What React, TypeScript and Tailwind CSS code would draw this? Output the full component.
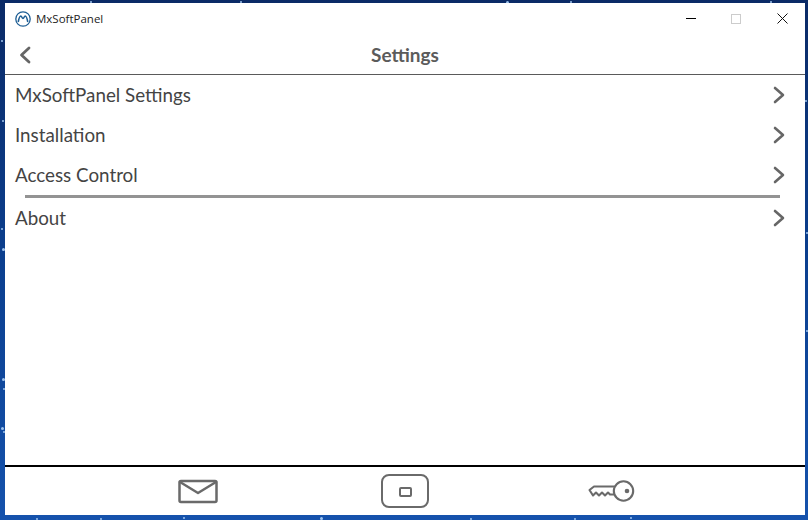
const font = { fontFamily: "Lato, 'Noto Sans', sans-serif" };

const specks: [number, number, number][] = [
  [2, 248, 3], [1, 228, 2], [2, 378, 3], [3, 388, 2], [1, 427, 3], [3, 431, 2], [2, 120, 2], [1, 40, 2],
  [183, 517, 2], [320, 517, 3], [100, 518, 2], [36, 518, 2], [574, 518, 2], [630, 517, 2], [470, 518, 2],
  [506, 1, 3], [570, 1, 2], [90, 1, 2], [240, 1, 2], [770, 1, 2], [806, 232, 2], [806, 330, 2], [805, 100, 2],
];

function Chevron() {
  return (
    <svg width="12" height="18" viewBox="0 0 12 18" fill="none" stroke="#666666" strokeWidth="2.6" strokeLinecap="round" strokeLinejoin="round">
      <path d="M2 2 L10 9 L2 16" />
    </svg>
  );
}

function Row({ label, className }: { label: string; className: string }) {
  return (
    <div className={`flex items-center justify-between pl-[10px] pr-[20px] text-[18.8px] text-[#444444] ${className}`}>
      <span className="whitespace-nowrap leading-none">{label}</span>
      <Chevron />
    </div>
  );
}

export default function App() {
  return (
    <div className="relative w-[808px] h-[520px] overflow-hidden pt-[3px] pl-[5px] pr-[3px] pb-[5px] bg-linear-to-b from-[#0a2a66] via-[#0b3f8f] to-[#1552ac]">
      {specks.map(([x, y, s], i) => (
        <div key={i} className="absolute bg-[#9fc4ee] rounded-full" style={{ left: x, top: y, width: s, height: s }} />
      ))}
      <div className="relative w-full h-full bg-white flex flex-col" style={font}>
        <div className="h-[33px] flex items-center shrink-0">
          <svg className="ml-[10px] -translate-y-px" width="16" height="16" viewBox="0 0 16 16" fill="none">
            <circle cx="8" cy="8" r="7.2" stroke="#1f5f95" strokeWidth="1.3" />
            <path d="M3.2 11 C4 7 5 5 5.8 5 C6.8 5 7 7.5 8 7.5 C9 7.5 9.2 5 10.2 5 C11 5 12 7 12.8 11" stroke="#1f5f95" strokeWidth="1.6" />
          </svg>
          <span className="ml-[5px] text-[11.5px] text-[#222] -translate-y-px" style={{ fontFamily: "'Open Sans', sans-serif" }}>MxSoftPanel</span>
          <div className="ml-auto flex items-center mr-[17px] -translate-y-px">
            <div className="w-[10px] h-px bg-black mr-[35px]" />
            <div className="w-[10px] h-[10px] border border-[#cccccc] mr-[36px]" />
            <svg width="11" height="11" viewBox="0 0 11 11" stroke="#111" strokeWidth="1">
              <path d="M0.5 0.5 L10.5 10.5 M10.5 0.5 L0.5 10.5" />
            </svg>
          </div>
        </div>
        <div className="relative h-[39px] flex items-center justify-center border-b border-[#5a5a5a] shrink-0">
          <div className="absolute left-[14px] top-[10px]">
            <svg width="12" height="18" viewBox="0 0 12 18" fill="none" stroke="#666666" strokeWidth="2.8" strokeLinecap="round" strokeLinejoin="round">
              <path d="M10 2 L2.5 9 L10 16" />
            </svg>
          </div>
          <span className="text-[19px] font-bold text-[#5b5b5b]">Settings</span>
        </div>
        <div className="flex-1 flex flex-col">
          <Row label="MxSoftPanel Settings" className="h-[40px]" />
          <Row label="Installation" className="h-[40px]" />
          <Row label="Access Control" className="h-[40px]" />
          <div className="h-[3px] bg-[#939393] ml-[20px] mr-[25px]" />
          <Row label="About" className="h-[40px]" />
        </div>
        <div className="h-[50px] shrink-0 border-t-2 border-black flex items-center">
          <div className="ml-[173px] mt-[1px]">
            <svg width="40" height="26" viewBox="0 0 40 26" fill="none" stroke="#6a6a6a" strokeWidth="2.5" strokeLinejoin="round" strokeLinecap="round">
              <rect x="1.5" y="2" width="37" height="21" rx="1.5" />
              <path d="M2 3 L20 14 L38 3" />
            </svg>
          </div>
          <div className="ml-[163px] w-[48px] h-[34px] border-[2.5px] border-[#6a6a6a] rounded-[8px] flex items-center justify-center">
            <div className="w-[13px] h-[10px] border-[2.5px] border-[#6a6a6a] rounded-[2px] translate-y-px" />
          </div>
          <div className="ml-[159px]">
            <svg width="47" height="24" viewBox="0 0 47 24" fill="none" stroke="#6a6a6a" strokeWidth="2.1" strokeLinejoin="round" strokeLinecap="round">
              <circle cx="35.5" cy="12" r="9.7" />
              <circle cx="39" cy="12" r="2.3" fill="#6a6a6a" stroke="none" />
              <path d="M26 7.5 H6 L1.5 11 L5 16.5 L8 13.5 L11 16.5 L14 13.5 L17 16.5 L20 13.5 L22 15.5 H26" />
            </svg>
          </div>
        </div>
      </div>
    </div>
  );
}
